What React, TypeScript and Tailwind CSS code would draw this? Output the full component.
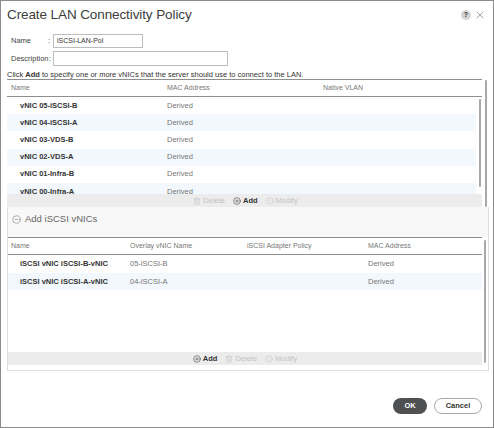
import { CirclePlus, CircleMinus, Trash2, Info, X } from "lucide-react";

type Row = { name: string; mac: string };

const vnics: Row[] = [
  { name: "vNIC 05-iSCSI-B", mac: "Derived" },
  { name: "vNIC 04-iSCSI-A", mac: "Derived" },
  { name: "vNIC 03-VDS-B", mac: "Derived" },
  { name: "vNIC 02-VDS-A", mac: "Derived" },
  { name: "vNIC 01-Infra-B", mac: "Derived" },
  { name: "vNIC 00-Infra-A", mac: "Derived" },
];

const iscsiVnics = [
  { name: "iSCSI vNIC iSCSI-B-vNIC", overlay: "05-iSCSI-B", policy: "", mac: "Derived" },
  { name: "iSCSI vNIC iSCSI-A-vNIC", overlay: "04-iSCSI-A", policy: "", mac: "Derived" },
];

function ToolItem({ kind, label, active }: { kind: "add" | "delete" | "modify"; label: string; active?: boolean }) {
  const color = active ? "#333" : "#c4c4c4";
  const Icon = kind === "add" ? CirclePlus : kind === "delete" ? Trash2 : Info;
  return (
    <div className="flex items-center gap-[2px]" style={{ color }}>
      <Icon size={8} strokeWidth={1.6} />
      <span className={active ? "text-[7.5px] font-bold" : "text-[7.5px]"}>{label}</span>
    </div>
  );
}

function Scrollbar({ className }: { className: string }) {
  return <div className={"w-[2px] rounded-full bg-[#a8a8a8] " + className} />;
}

export default function App() {
  return (
    <div className="w-[494px] h-[428px] bg-white border border-[#8c8c8c] flex flex-col overflow-hidden font-['Liberation_Sans',Arial,sans-serif] text-[#333]">
      {/* title */}
      <div className="h-[28px] flex items-center justify-between pl-[6px] pr-[7px]">
        <span className="text-[13.5px] text-[#3d3d3d] tracking-[-0.1px]">Create LAN Connectivity Policy</span>
        <div className="flex items-center gap-[3px]">
          <div className="w-[10px] h-[10px] rounded-full bg-[#d4d4d4] flex items-center justify-center text-[7px] font-bold text-[#333]">?</div>
          <X size={12} strokeWidth={1.2} className="text-[#666]" />
        </div>
      </div>

      {/* form */}
      <div className="pl-[10px] mt-[5px] flex flex-col gap-[3px] text-[7.5px] text-[#444]">
        <div className="flex items-center">
          <span className="w-[37px]">Name</span>
          <span className="w-[5px]">:</span>
          <div className="w-[90px] h-[14px] border border-[#bdbdbd] flex items-center pl-[3px] text-[7px] text-[#333]">iSCSI-LAN-Pol</div>
        </div>
        <div className="flex items-center">
          <span className="w-[38px]">Description</span>
          <span className="w-[4px]">:</span>
          <div className="w-[175px] h-[15px] border border-[#bdbdbd]" />
        </div>
      </div>

      <div className="mt-[4px] h-[9px] leading-[9px] pl-[6px] text-[7.5px] text-[#333]">
        Click <b>Add</b> to specify one or more vNICs that the server should use to connect to the LAN.
      </div>

      <div className="ml-[6px] w-[482px] flex flex-col">
        {/* vNIC table */}
        <div className="flex">
          <div className="w-[475px] flex flex-col">
            <div className="border-y border-[#8f8f8f] h-[18px] grid grid-cols-[160px_156px_1fr] items-center text-[7px] text-[#777]">
              <span className="pl-[4px]">Name</span>
              <span>MAC Address</span>
              <span>Native VLAN</span>
            </div>
            <div className="flex h-[97px] overflow-hidden">
              <div className="w-[469px] flex flex-col">
                {vnics.map((r, i) => (
                  <div
                    key={r.name}
                    className={
                      "h-[17.2px] shrink-0 grid grid-cols-[160px_156px_1fr] items-center text-[7.5px] leading-[8px] " +
                      (i % 2 === 1 ? "bg-[#f2f8fd]" : "bg-white")
                    }
                  >
                    <span className="pl-[13px] font-bold text-[#333]">{r.name}</span>
                    <span className="text-[#777]">{r.mac}</span>
                    <span />
                  </div>
                ))}
              </div>
              <Scrollbar className="ml-[3px] mt-[2px] h-[88px] w-[2.5px]" />
            </div>
            <div className="h-[13px] bg-[#ececec] flex items-center justify-center gap-[8px] pl-[2px]">
              <ToolItem kind="delete" label="Delete" />
              <ToolItem kind="add" label="Add" active />
              <ToolItem kind="modify" label="Modify" />
            </div>
          </div>
          <Scrollbar className="ml-[3px] mt-[1px] h-[127px] w-[2.5px]" />
        </div>

        {/* iSCSI panel */}
        <div className="border-x border-b border-[#dedede] flex flex-col pb-[5px]">
          <div className="h-[30px] bg-[#f8f8f8] pl-[4px] pt-[6px]">
            <div className="h-[13px] flex items-center gap-[4px] text-[#666]">
              <CircleMinus size={9} strokeWidth={1.3} />
              <span className="text-[9.5px]">Add iSCSI vNICs</span>
            </div>
          </div>
          <div className="flex">
            <div className="w-[474px] flex flex-col">
              <div className="border-y border-[#8f8f8f] h-[18px] grid grid-cols-[122px_117px_121px_1fr] items-center text-[7px] text-[#777]">
                <span className="pl-[3px]">Name</span>
                <span>Overlay vNIC Name</span>
                <span>iSCSI Adapter Policy</span>
                <span>MAC Address</span>
              </div>
              <div className="h-[97px] flex flex-col">
                {iscsiVnics.map((r, i) => (
                  <div
                    key={r.name}
                    className={
                      "h-[17.5px] shrink-0 grid grid-cols-[122px_117px_121px_1fr] items-center text-[7.5px] " +
                      (i % 2 === 1 ? "bg-[#f2f8fd]" : "bg-white")
                    }
                  >
                    <span className="pl-[12px] font-bold text-[#333]">{r.name}</span>
                    <span className="text-[#777]">{r.overlay}</span>
                    <span className="text-[#777]">{r.policy}</span>
                    <span className="text-[#777]">{r.mac}</span>
                  </div>
                ))}
              </div>
              <div className="h-[13px] bg-[#ececec] flex items-center justify-center gap-[8px]">
                <ToolItem kind="add" label="Add" active />
                <ToolItem kind="delete" label="Delete" />
                <ToolItem kind="modify" label="Modify" />
              </div>
            </div>
            <Scrollbar className="ml-[2px] mt-[3px] h-[123px]" />
          </div>
        </div>
      </div>

      {/* buttons */}
      <div className="mt-[27px] flex justify-end gap-[7px] pr-[11px]">
        <button className="w-[34px] h-[16px] rounded-full bg-[#4e5052] text-white text-[7.5px] font-bold">OK</button>
        <button className="w-[48px] h-[16px] rounded-full border border-[#a9a9a9] bg-white text-[#333] text-[7.5px] font-bold">Cancel</button>
      </div>
    </div>
  );
}
